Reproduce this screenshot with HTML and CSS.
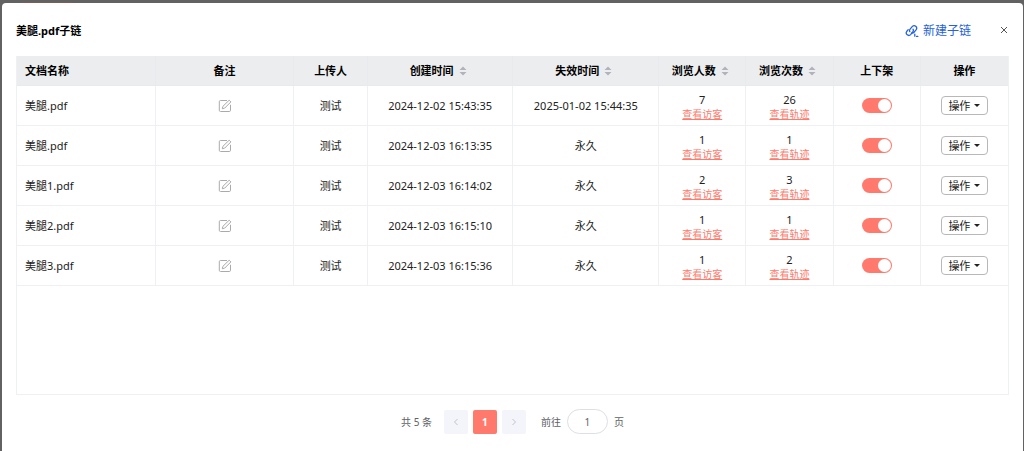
FILE: index.html
```html
<!DOCTYPE html>
<html lang="zh-CN">
<head>
<meta charset="utf-8">
<meta name="viewport" content="width=device-width, initial-scale=1">
<title>美腿.pdf子链</title>
<link rel="stylesheet" href="styles.css">
</head>
<body>
<svg class="sprite" aria-hidden="true">
  <symbol id="edit" viewBox="0 0 14 14"><path d="M9 1.5H2.5A1.2 1.2 0 0 0 1.3 2.7v8.6a1.2 1.2 0 0 0 1.2 1.2h8.8a1.2 1.2 0 0 0 1.2-1.2V5.8"/><path d="M4.3 9.8l.6-2.5 6.3-6.1 1.7 1.7-6.2 6.2z"/></symbol>
  <symbol id="sort" viewBox="0 0 8 10"><path d="M4 0.5L7.5 4h-7zM4 9.5L.5 6h7z"/></symbol>
</svg>
<main class="dialog" role="dialog" aria-labelledby="title">
  <header class="dialog-head">
    <h1 class="title" id="title">美腿.pdf子链</h1>
    <a class="create" href="#new">
      <svg class="create-icon" viewBox="0 0 14 14" aria-hidden="true"><path d="M4.8 7.6a2.3 2.3 0 0 1 .3-2.5L7.4 2.4a2.5 2.5 0 0 1 3.8 3.2L9 8.3a2.3 2.3 0 0 1-2.3.7"/><path d="M8 5.2a2.3 2.3 0 0 1-.2 2.6l-2.2 2.8a2.5 2.5 0 0 1-3.9-3.1l1.5-1.8"/><path d="M9.8 10.2v2M11.6 12.4h1.2"/></svg>
      新建子链
    </a>
    <button class="close" type="button" aria-label="关闭"><svg viewBox="0 0 8 8" aria-hidden="true"><path d="M1 1l6 6M7 1L1 7"/></svg></button>
  </header>

  <div class="table-box">
    <table class="table">
      <colgroup><col class="wide"><col class="wide"><col class="user"><col class="date"><col class="date"><col class="narrow"><col class="narrow"><col class="narrow"><col class="narrow"></colgroup>
      <thead>
        <tr>
          <th class="name" scope="col">文档名称</th>
          <th scope="col">备注</th>
          <th scope="col">上传人</th>
          <th scope="col"><button class="sort" type="button">创建时间<svg aria-hidden="true"><use href="#sort"/></svg></button></th>
          <th scope="col"><button class="sort" type="button">失效时间<svg aria-hidden="true"><use href="#sort"/></svg></button></th>
          <th scope="col"><button class="sort" type="button">浏览人数<svg aria-hidden="true"><use href="#sort"/></svg></button></th>
          <th scope="col"><button class="sort" type="button">浏览次数<svg aria-hidden="true"><use href="#sort"/></svg></button></th>
          <th scope="col">上下架</th>
          <th scope="col">操作</th>
        </tr>
      </thead>
      <tbody>
        <tr>
          <td class="name">美腿.pdf</td>
          <td><button class="edit" type="button" aria-label="编辑备注"><svg aria-hidden="true"><use href="#edit"/></svg></button></td>
          <td>测试</td><td>2024-12-02 15:43:35</td><td>2025-01-02 15:44:35</td>
          <td><div class="count">7</div><a class="more" href="#visitors">查看访客</a></td>
          <td><div class="count">26</div><a class="more" href="#tracks">查看轨迹</a></td>
          <td><input class="switch" type="checkbox" role="switch" aria-label="上下架" checked></td>
          <td><button class="action" type="button">操作<span class="caret"></span></button></td>
        </tr>
        <tr>
          <td class="name">美腿.pdf</td>
          <td><button class="edit" type="button" aria-label="编辑备注"><svg aria-hidden="true"><use href="#edit"/></svg></button></td>
          <td>测试</td><td>2024-12-03 16:13:35</td><td>永久</td>
          <td><div class="count">1</div><a class="more" href="#visitors">查看访客</a></td>
          <td><div class="count">1</div><a class="more" href="#tracks">查看轨迹</a></td>
          <td><input class="switch" type="checkbox" role="switch" aria-label="上下架" checked></td>
          <td><button class="action" type="button">操作<span class="caret"></span></button></td>
        </tr>
        <tr>
          <td class="name">美腿1.pdf</td>
          <td><button class="edit" type="button" aria-label="编辑备注"><svg aria-hidden="true"><use href="#edit"/></svg></button></td>
          <td>测试</td><td>2024-12-03 16:14:02</td><td>永久</td>
          <td><div class="count">2</div><a class="more" href="#visitors">查看访客</a></td>
          <td><div class="count">3</div><a class="more" href="#tracks">查看轨迹</a></td>
          <td><input class="switch" type="checkbox" role="switch" aria-label="上下架" checked></td>
          <td><button class="action" type="button">操作<span class="caret"></span></button></td>
        </tr>
        <tr>
          <td class="name">美腿2.pdf</td>
          <td><button class="edit" type="button" aria-label="编辑备注"><svg aria-hidden="true"><use href="#edit"/></svg></button></td>
          <td>测试</td><td>2024-12-03 16:15:10</td><td>永久</td>
          <td><div class="count">1</div><a class="more" href="#visitors">查看访客</a></td>
          <td><div class="count">1</div><a class="more" href="#tracks">查看轨迹</a></td>
          <td><input class="switch" type="checkbox" role="switch" aria-label="上下架" checked></td>
          <td><button class="action" type="button">操作<span class="caret"></span></button></td>
        </tr>
        <tr>
          <td class="name">美腿3.pdf</td>
          <td><button class="edit" type="button" aria-label="编辑备注"><svg aria-hidden="true"><use href="#edit"/></svg></button></td>
          <td>测试</td><td>2024-12-03 16:15:36</td><td>永久</td>
          <td><div class="count">1</div><a class="more" href="#visitors">查看访客</a></td>
          <td><div class="count">2</div><a class="more" href="#tracks">查看轨迹</a></td>
          <td><input class="switch" type="checkbox" role="switch" aria-label="上下架" checked></td>
          <td><button class="action" type="button">操作<span class="caret"></span></button></td>
        </tr>
      </tbody>
    </table>
  </div>

  <nav class="pager" aria-label="分页">
    <span class="total">共 5 条</span>
    <div class="pages">
      <button class="page" type="button" aria-label="上一页" disabled><svg viewBox="0 0 8 8" aria-hidden="true"><path d="M5.5 1l-3 3 3 3"/></svg></button>
      <button class="page current" type="button" aria-current="page">1</button>
      <button class="page" type="button" aria-label="下一页" disabled><svg viewBox="0 0 8 8" aria-hidden="true"><path d="M2.5 1l3 3-3 3"/></svg></button>
    </div>
    <div class="jump"><label for="jump">前往</label><input id="jump" type="text" inputmode="numeric" value="1"><span>页</span></div>
  </nav>
</main>
</body>
</html>
```
FILE: styles.css
```css
* { box-sizing: border-box; }

body {
  display: flex;
  flex-direction: column;
  min-height: 100vh;
  margin: 0;
  padding: 3px 1px 0 2px;
  background: linear-gradient(#7d5b5a, #7d5b5a) 22px 2px / 50px 1px no-repeat #626262;
  color: #222;
  font: 11px/16px "Noto Sans", "Noto Sans CJK SC", sans-serif;
}

button, input { font: inherit; color: inherit; }
button { padding: 0; border: 0; background: none; cursor: pointer; }
svg { display: block; fill: none; }
.sprite { display: none; }

.dialog {
  flex: 1;
  padding: 16px 14px;
  border-radius: 4px 4px 0 0;
  background: #fff;
}

.dialog-head { display: flex; align-items: center; height: 24px; margin-bottom: 13px; }
.title { flex: 1; margin: 0; font-size: 11px; font-weight: 700; color: #000; }
.create { display: flex; align-items: center; gap: 4px; font-size: 12px; color: #2563d9; text-decoration: none; }
.create-icon { width: 14px; height: 14px; stroke: currentColor; stroke-width: 1.3; stroke-linecap: round; }
.close { margin-left: 28px; padding: 0 1px 2px; }
.close svg { width: 8px; height: 8px; stroke: #555; }

.table-box { min-height: 339px; border: 1px solid #eff0f3; border-top: 0; }
.table { width: 100%; table-layout: fixed; border-collapse: separate; border-spacing: 0; text-align: center; }
.wide { width: 14%; }
.user { width: 7.4%; }
.date { width: 14.7%; }
.narrow { width: 8.8%; }
.table th, .table td { padding: 0; border-right: 1px solid #eff0f3; border-bottom: 1px solid #eff0f3; vertical-align: middle; }
.table th:last-child, .table td:last-child { border-right: 0; }
.table th { height: 30px; border-color: #e8eaee; background: #ecedef; color: #000; font-weight: 700; }
.table td { height: 40px; }
.table .name { padding-left: 8px; text-align: left; }

.sort { display: inline-flex; align-items: center; font-weight: 700; }
.sort svg { width: 8px; height: 10px; margin: 0 4px 0 5px; fill: #b0b3bb; }
.edit { display: block; margin: 0 auto; }
.edit svg { width: 14px; height: 14px; stroke: #aaa; }
.count { padding-top: 2px; line-height: 14px; }
.more { display: block; font-size: 10px; line-height: 14px; color: #ff7a6c; }

.switch { display: block; appearance: none; width: 30px; height: 15px; margin: 0 auto; padding: 1px; border-radius: 8px; background: #ff7a6c; }
.switch::before { content: ""; display: block; width: 13px; height: 13px; border-radius: 50%; background: #fff; }
.switch:checked::before { margin-left: auto; }

.action { display: inline-flex; align-items: center; justify-content: center; gap: 4px; width: 47px; height: 19px; border: 1px solid #b8b8b8; border-radius: 4px; vertical-align: middle; background: #fff; }
.caret { border: 3px solid transparent; border-top-color: #222; border-bottom: 0; }

.pager { display: flex; align-items: center; justify-content: center; gap: 12px; margin-top: 14px; font-size: 10px; color: #606266; }
.pages { display: flex; gap: 5px; }
.page { display: grid; place-items: center; width: 24px; height: 24px; border-radius: 2px; background: #f4f5fa; }
.page svg { width: 8px; height: 8px; stroke: #c0c4cc; }
.page.current { background: #ff7a6c; color: #fff; font-weight: 700; }
.jump { display: flex; align-items: center; gap: 6px; margin-left: 3px; }
.jump input { width: 41px; height: 25px; padding: 0; border: 1px solid #dcdfe6; border-radius: 13px; background: #fff; text-align: center; }
```
